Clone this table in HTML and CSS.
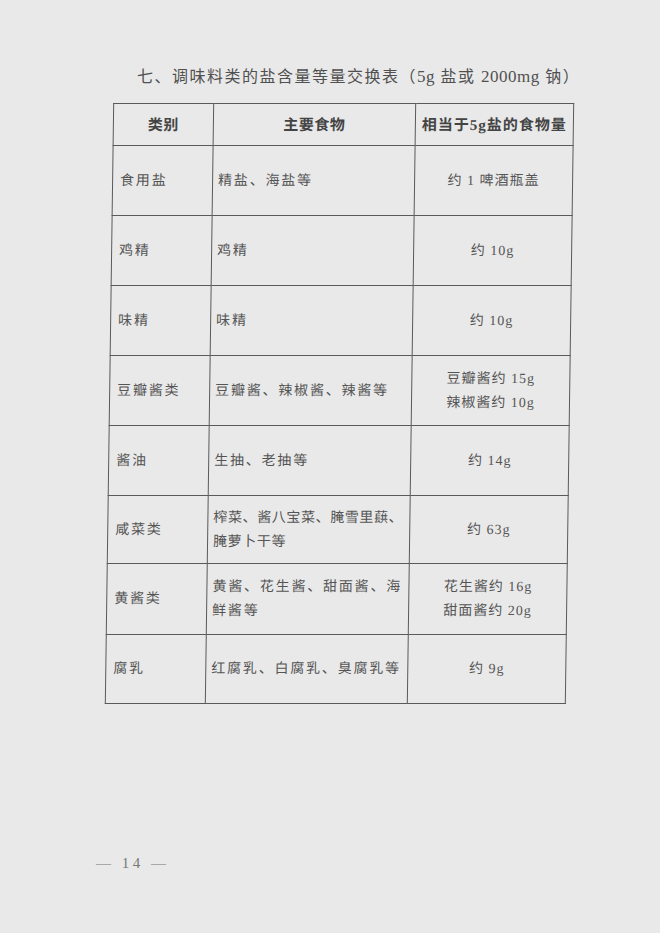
FILE: index.html
```html
<!DOCTYPE html>
<html lang="zh-CN">
<head>
<meta charset="utf-8">
<title>调味料类的盐含量等量交换表</title>
<link rel="stylesheet" href="styles.css">
</head>
<body>
<div class="page">
  <h1 class="title">七、调味料类的盐含量等量交换表（<span class="lat">5g</span> 盐或 <span class="lat">2000mg</span> 钠）</h1>
  <table class="salt">
    <colgroup>
      <col class="c1"><col class="c2"><col class="c3">
    </colgroup>
    <thead>
      <tr class="head">
        <th>类别</th>
        <th>主要食物</th>
        <th class="h3">相当于5g盐的食物量</th>
      </tr>
    </thead>
    <tbody>
      <tr class="r70">
        <td>食用盐</td>
        <td>精盐、海盐等</td>
        <td class="amt">约 1 啤酒瓶盖</td>
      </tr>
      <tr class="r70">
        <td>鸡精</td>
        <td>鸡精</td>
        <td class="amt">约 10g</td>
      </tr>
      <tr class="r70">
        <td>味精</td>
        <td>味精</td>
        <td class="amt">约 10g</td>
      </tr>
      <tr class="r70">
        <td>豆瓣酱类</td>
        <td>豆瓣酱、辣椒酱、辣酱等</td>
        <td class="amt">豆瓣酱约 15g<br>辣椒酱约 10g</td>
      </tr>
      <tr class="r70">
        <td>酱油</td>
        <td>生抽、老抽等</td>
        <td class="amt">约 14g</td>
      </tr>
      <tr class="r68">
        <td>咸菜类</td>
        <td class="tight">榨菜、酱八宝菜、腌雪里蕻、<br>腌萝卜干等</td>
        <td class="amt">约 63g</td>
      </tr>
      <tr class="r71">
        <td>黄酱类</td>
        <td>黄酱、花生酱、甜面酱、海<br>鲜酱等</td>
        <td class="amt">花生酱约 16g<br>甜面酱约 20g</td>
      </tr>
      <tr class="r69">
        <td>腐乳</td>
        <td>红腐乳、白腐乳、臭腐乳等</td>
        <td class="amt">约 9g</td>
      </tr>
    </tbody>
  </table>
  <div class="folio">— 14 —</div>
</div>
</body>
</html>
```

FILE: styles.css
```css
html, body {
  margin: 0;
  padding: 0;
  background: #e9e9e9;
}

.page {
  width: 660px;
  height: 933px;
  box-sizing: border-box;
  padding-top: 65px;
  background: #e9e9e9;
  color: #4c4c4c;
  font-family: "Liberation Serif", "Noto Sans CJK SC", serif;
  display: flex;
  flex-direction: column;
}

.title {
  margin: 0 0 0 137px;
  font-size: 16px;
  font-weight: normal;
  line-height: 24px;
  letter-spacing: 1.5px;
  color: #505050;
  white-space: nowrap;
}

.title .lat {
  font-size: 17px;
  letter-spacing: 0.5px;
}

.salt {
  margin: 14px 0 0 109px;
  width: 460px;
  border-collapse: collapse;
  table-layout: fixed;
  transform: skewX(-0.8deg);
  font-size: 14px;
  line-height: 24px;
  color: #555;
}

.c1 { width: 100px; }
.c2 { width: 202px; }
.c3 { width: 158px; }

.salt th,
.salt td {
  border: 1px solid #5a5a5a;
  vertical-align: middle;
  padding: 0 0 0 7px;
  text-align: left;
  letter-spacing: 1.8px;
}

.salt td:nth-child(2) {
  padding-left: 5px;
}

.salt th {
  text-align: center;
  font-size: 15px;
  font-weight: bold;
  padding: 0;
  letter-spacing: 0.5px;
  color: #444;
}

.salt th.h3 {
  letter-spacing: 1px;
}

.head { height: 42px; }
.r70 { height: 70px; }
.r68 { height: 68px; }
.r71 { height: 71px; }
.r69 { height: 69px; }

.salt td.amt {
  text-align: center;
  padding: 0;
  letter-spacing: 1px;
}

.salt td.tight {
  letter-spacing: 0.6px;
}

.folio {
  margin: 149px 0 0 96px;
  font-size: 15px;
  line-height: 20px;
  color: #777;
  letter-spacing: 3.5px;
}
```
